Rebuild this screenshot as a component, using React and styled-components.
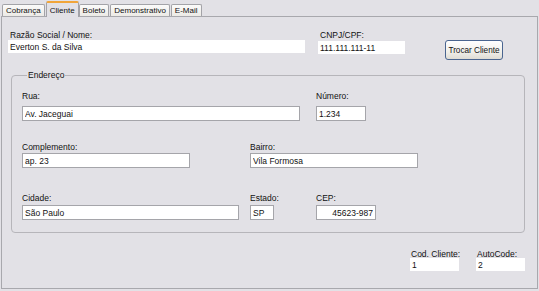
import React from 'react';
import styled, { createGlobalStyle } from 'styled-components';

const GlobalStyle = createGlobalStyle`
  body {
    margin: 0;
    background: #e2e1e6;
    font-family: "Liberation Sans", Arial, sans-serif;
  }
`;

const Window = styled.div`
  width: 539px;
  height: 291px;
  box-sizing: border-box;
  padding: 1px 1px 2px 1px;
  display: flex;
  flex-direction: column;
  background: #e2e1e6;
  font-size: 8.5px;
  color: #111;
`;

const TabBar = styled.div`
  display: flex;
  align-items: flex-end;
  height: 16px;
  padding-left: 1px;
  margin-bottom: -1px;
  position: relative;
  z-index: 1;
`;

const Tab = styled.div`
  box-sizing: border-box;
  height: ${p => (p.active ? '16px' : '12px')};
  margin-bottom: ${p => (p.active ? '0' : '1px')};
  margin-right: ${p => (p.active ? '0' : '1px')};
  padding: 0 3px;
  display: flex;
  align-items: center;
  border: 1px solid #a3a3a8;
  border-bottom: none;
  border-top: ${p => (p.active ? '2px solid #f1a539' : '1px solid #a3a3a8')};
  border-radius: 2px 2px 0 0;
  background: ${p => (p.active ? '#e2e1e6' : 'linear-gradient(#fbfbfa, #eceae6)')};
  font-size: 8px;
  white-space: nowrap;
`;

const Panel = styled.div`
  flex: 1;
  border: 1px solid #a8a8ad;
  background: #e2e1e6;
  display: flex;
  flex-direction: column;
`;

const TopRow = styled.div`
  display: flex;
  align-items: flex-start;
  padding: 13px 0 0 6px;
`;

const Field = styled.div`
  display: flex;
  flex-direction: column;
  width: ${p => p.w}px;
  margin-left: ${p => p.ml || 0}px;
`;

const Label = styled.label`
  display: block;
  line-height: 10px;
  height: 10px;
  white-space: nowrap;
  padding-left: ${p => p.indent || 0}px;
  margin-bottom: ${p => p.gap || 0}px;
`;

const TextBox = styled.input`
  box-sizing: border-box;
  width: 100%;
  height: ${p => (p.flat ? 13 : 15)}px;
  margin: 0;
  padding: 0 2px;
  border: ${p => (p.flat ? 'none' : '1px solid #a5a5aa')};
  background: #fff;
  font-family: "Liberation Sans", Arial, sans-serif;
  font-size: 8.5px;
  color: #111;
  text-align: ${p => p.align || 'left'};
  outline: none;
`;

const Button = styled.button`
  box-sizing: border-box;
  width: 58px;
  height: 20px;
  margin: 10px 0 0 40px;
  padding: 0;
  border: 1px solid #4a6590;
  border-radius: 3px;
  background: linear-gradient(#ffffff, #f0efea 60%, #dedcd4);
  font-family: "Liberation Sans", Arial, sans-serif;
  font-size: 8.2px;
  color: #111;
`;

const GroupBox = styled.fieldset`
  box-sizing: border-box;
  width: 514px;
  margin: 10px 0 0 9px;
  padding: 0 0 12px 10px;
  border: 1px solid #b6b5ba;
  border-radius: 4px;
  min-inline-size: 0;
`;

const Legend = styled.legend`
  margin-left: 5px;
  padding: 0 1px;
  line-height: 10px;
`;

const AddrRow = styled.div`
  display: grid;
  grid-template-columns: 228px 66px 1fr;
  align-items: start;
  margin-top: ${p => p.mt}px;
`;

const BottomRow = styled.div`
  display: flex;
  justify-content: flex-end;
  gap: 17px;
  padding-right: 12px;
  margin-top: 16px;
`;

const Box = ({ label, value, w, gap, indent, flat, align, span, ml }) => (
  <Field w={w} ml={ml} style={span ? { gridColumn: span } : undefined}>
    <Label indent={indent} gap={gap}>{label}</Label>
    <TextBox flat={flat} align={align} readOnly defaultValue={value} />
  </Field>
);

const tabs = ['Cobrança', 'Cliente', 'Boleto', 'Demonstrativo', 'E-Mail'];

export default function App() {
  return (
    <Window>
      <GlobalStyle />
      <TabBar>
        {tabs.map(t => (
          <Tab key={t} active={t === 'Cliente'}>{t}</Tab>
        ))}
      </TabBar>
      <Panel>
        <TopRow>
          <Box label="Razão Social / Nome:" value="Everton S. da Silva" w={297} indent={2} flat />
          <Box label="CNPJ/CPF:" value="111.111.111-11" w={87} indent={2} gap={1} flat ml={13} />
          <Button>Trocar Cliente</Button>
        </TopRow>

        <GroupBox>
          <Legend>Endereço</Legend>
          <AddrRow mt={11}>
            <Box label="Rua:" value="Av. Jaceguai" w={278} gap={5} span="1 / 3" />
            <Box label="Número:" value="1.234" w={50} gap={5} />
          </AddrRow>
          <AddrRow mt={21}>
            <Box label="Complemento:" value="ap. 23" w={168} gap={1} />
            <Box label="Bairro:" value="Vila Formosa" w={168} gap={1} span="2 / 4" />
          </AddrRow>
          <AddrRow mt={25}>
            <Box label="Cidade:" value="São Paulo" w={217} gap={2} />
            <Box label="Estado:" value="SP" w={24} gap={2} />
            <Box label="CEP:" value="45623-987" w={60} gap={2} align="right" />
          </AddrRow>
        </GroupBox>

        <BottomRow>
          <Box label="Cod. Cliente:" value="1" w={49} indent={1} gap={-1} flat />
          <Box label="AutoCode:" value="2" w={49} indent={1} gap={-1} flat />
        </BottomRow>
      </Panel>
    </Window>
  );
}
